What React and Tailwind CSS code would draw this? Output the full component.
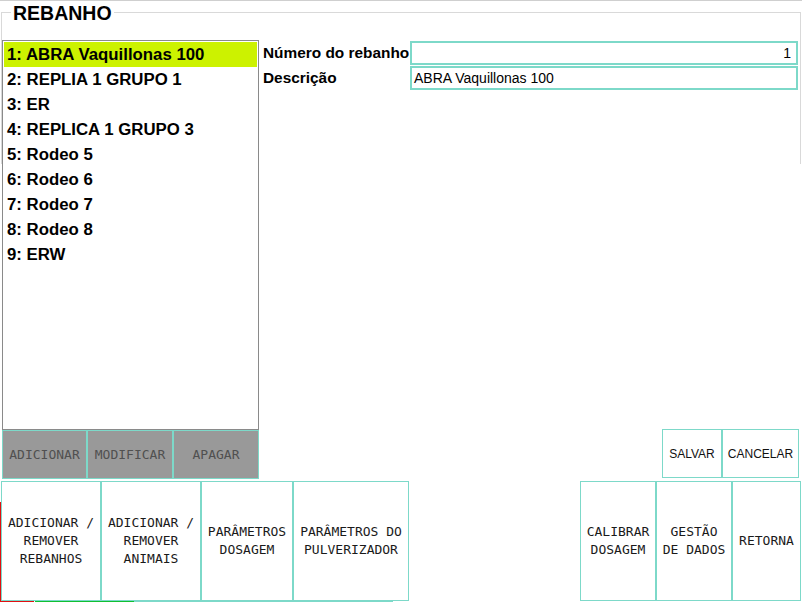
import React from 'react'

const herds = [
  '1: ABRA Vaquillonas 100',
  '2: REPLIA 1 GRUPO 1',
  '3: ER',
  '4: REPLICA 1 GRUPO 3',
  '5: Rodeo 5',
  '6: Rodeo 6',
  '7: Rodeo 7',
  '8: Rodeo 8',
  '9: ERW'
]

const listButtons = [
  { label: 'ADICIONAR', w: 'w-[85px]' },
  { label: 'MODIFICAR', w: 'w-[86px]' },
  { label: 'APAGAR', w: 'w-[86px]' }
]

const leftActions = [
  { lines: ['ADICIONAR /', 'REMOVER', 'REBANHOS'], w: 'w-[100px]' },
  { lines: ['ADICIONAR /', 'REMOVER', 'ANIMAIS'], w: 'w-[100px]' },
  { lines: ['PARÂMETROS', 'DOSAGEM'], w: 'w-[92px]' },
  { lines: ['PARÂMETROS DO', 'PULVERIZADOR'], w: 'w-[116px]' }
]

const rightActions = [
  { lines: ['CALIBRAR', 'DOSAGEM'], w: 'w-[76px]' },
  { lines: ['GESTÃO', 'DE DADOS'], w: 'w-[76px]' },
  { lines: ['RETORNA'], w: 'w-[69px]' }
]

const ActionButton = ({ lines, w }) => (
  <button
    type="button"
    className={`${w} h-full flex flex-col items-center justify-center border border-[#7dd9c9] bg-white font-['DejaVu_Sans_Mono',monospace] text-[13px] leading-[18px] text-[#1a1a1a] whitespace-pre`}
  >
    {lines.map((l) => (
      <span key={l}>{l}</span>
    ))}
  </button>
)

export default function App() {
  const selected = 0

  return (
    <div className="relative w-[802px] h-[602px] overflow-hidden bg-white border-t border-[#cfcfcf] font-['Liberation_Sans',Arial,sans-serif] text-black">
      {/* group box frame */}
      <div className="absolute left-[1px] right-[1px] top-[11px] h-[152px] border border-b-0 border-[#d9d9d9]" />

      <div className="relative h-[39px] pl-[11px] pt-[1px]">
        <span className="bg-white px-[2px] text-[19.5px] font-bold leading-[22px]">REBANHO</span>
      </div>

      <div className="relative flex h-[439px]">
        <div className="ml-[2px] w-[257px] flex flex-col">
          <div className="h-[390px] border border-[#8a8a8a] bg-white p-[1px]">
            {herds.map((h, i) => (
              <div
                key={h}
                className={`h-[25px] pl-[3px] text-[16.8px] font-bold leading-[25px] ${i === selected ? 'bg-[#ccf200]' : ''}`}
              >
                {h}
              </div>
            ))}
          </div>
          <div className="flex h-[49px]">
            {listButtons.map((b) => (
              <button
                key={b.label}
                type="button"
                className={`${b.w} h-full border border-[#7dd9c9] bg-[#999999] font-['DejaVu_Sans_Mono',monospace] text-[13px] text-[#505050]`}
              >
                {b.label}
              </button>
            ))}
          </div>
        </div>

        <div className="flex-1 flex flex-col pl-[4px] pr-[4px] pt-[1px]">
          <div className="flex h-[24px] items-center">
            <div className="w-[147px] text-[15.4px] font-bold">Número do rebanho</div>
            <div className="flex-1 h-full border-2 border-[#7dd9c9] px-[5px] text-right text-[14px] leading-[20px]">1</div>
          </div>
          <div className="mt-[1px] flex h-[24px] items-center">
            <div className="w-[147px] text-[15.4px] font-bold">Descrição</div>
            <div className="flex-1 h-full border-2 border-[#7dd9c9] px-[2px] text-[14px] leading-[20px]">ABRA Vaquillonas 100</div>
          </div>

          <div className="mt-auto mb-[1px] -mr-[1px] flex h-[49px] justify-end">
            <button type="button" className="w-[60px] h-full border border-[#7dd9c9] bg-white text-[12px] text-[#111]">
              SALVAR
            </button>
            <button type="button" className="w-[77px] h-full border border-[#7dd9c9] bg-white text-[12px] text-[#111]">
              CANCELAR
            </button>
          </div>
        </div>
      </div>

      <div className="mt-[2px] flex h-[120px]">
        <div className="w-[1px] flex flex-col pt-[21px]">
          <div className="flex-1 bg-[#e01010]" />
        </div>
        {leftActions.map((a) => (
          <ActionButton key={a.lines.join()} {...a} />
        ))}
        <div className="flex-1" />
        {rightActions.map((a) => (
          <ActionButton key={a.lines.join()} {...a} />
        ))}
        <div className="w-[1px]" />
      </div>

      <div className="flex h-[1px]">
        <div className="w-[34px] bg-[#e01010]" />
        <div className="ml-[1px] w-[99px] bg-[#11c030]" />
        <div className="w-[259px] bg-[#7dd9c9]" />
      </div>
    </div>
  )
}
